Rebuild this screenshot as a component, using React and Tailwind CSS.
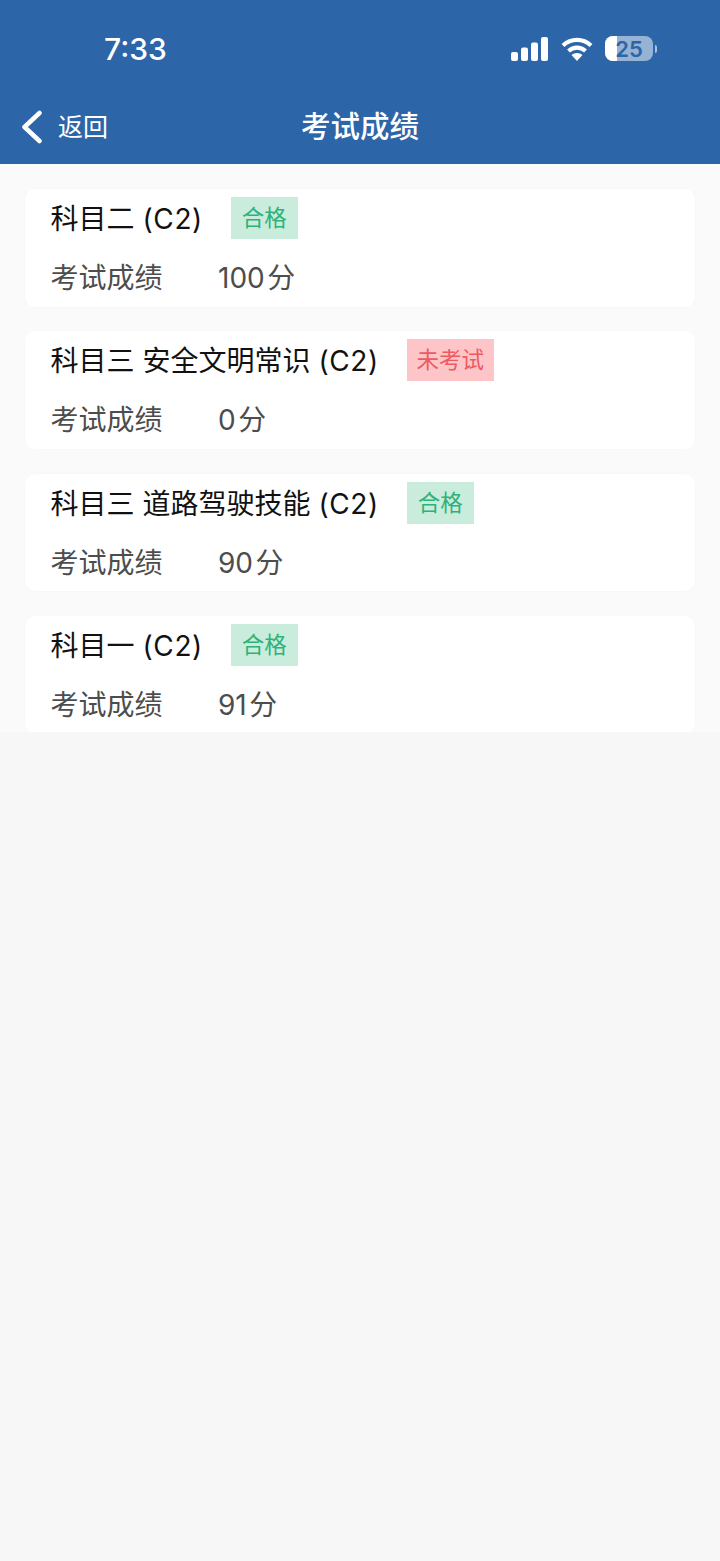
const scores = [
    { id: 1, title: "科目二", status: "合格", score: "100" },
    { id: 2, title: "科目三 安全文明常识", status: "未考试", score: "0" },
    { id: 3, title: "科目三 道路驾驶技能", status: "合格", score: "90" },
    { id: 4, title: "科目一", status: "合格", score: "91" },
];

function StatusBar() {
    return (
        <div className="flex h-[92px] items-start justify-between pl-[104px] pr-[63px] pt-[31px] text-white">
            <span className="text-[30px] font-medium leading-9">7:33</span>
            <div className="flex items-center pt-[5px]">
                <svg width="37" height="24" viewBox="0 0 37 24" fill="white">
                    <rect x="0" y="15" width="7" height="9" rx="2" />
                    <rect x="10" y="10.5" width="7" height="13.5" rx="2" />
                    <rect x="20" y="5.5" width="7" height="18.5" rx="2" />
                    <rect x="30" y="0" width="7" height="24" rx="2" />
                </svg>
                <svg className="ml-[13px]" width="32" height="24" viewBox="0 0 32 24" fill="none" stroke="white" strokeWidth="4.2">
                    <path d="M2 8.5C10 1 22 1 30 8.5" />
                    <path d="M7.5 14C12.5 9.5 19.5 9.5 24.5 14" />
                    <path d="M16 24l-5.5-6C13.5 15.2 18.5 15.2 21.5 18z" fill="white" stroke="none" />
                </svg>
                <div className="relative ml-3 flex h-[25px] w-12 items-center justify-center rounded-[8px] bg-white/50">
                    <div className="absolute inset-y-0 left-0 w-3 rounded-l-[8px] bg-white" />
                    <span className="relative text-[22px] font-semibold leading-none text-[#2c65a8]">25</span>
                </div>
                <div className="ml-[2px] h-2 w-[2px] rounded-r-sm bg-white/60" />
            </div>
        </div>
    );
}

function ScoreCard({ item }) {
    const passed = item.status === "合格";
    return (
        <div className="h-[117.5px] shrink-0 rounded-[10px] bg-white px-[25.5px] pt-2 shadow-[0_0_2px_rgba(0,0,0,0.03)]">
            <div className="flex h-[42px] items-start">
                <span className="mt-px text-[28px] leading-[42px] text-[#111111]">
                    {item.title}
                    <span className="ml-2 tracking-[0.6px]">(C2)</span>
                </span>
                <span
                    className={`ml-[28px] h-[42px] text-center text-[22.5px] leading-[42px] ${
                        passed ? "w-[67px] bg-[#c9ecdd] text-[#2fb27a]" : "w-[87px] bg-[#fdc5c7] text-[#ee5a60]"
                    }`}
                >
                    {item.status}
                </span>
            </div>
            <div className="mt-[18px] flex items-center text-[28px] leading-[42px] text-[#4d4d4d]">
                <span className="w-[167.5px]">考试成绩</span>
                <span>{item.score}</span>
                <span className="ml-[2.5px]">分</span>
            </div>
        </div>
    );
}

export default function App() {
    return (
        <div className="min-h-[1561px] bg-[#f7f7f7] font-['Inter','Noto_Sans_CJK_SC',sans-serif]">
            <div className="h-[164px] bg-[#2c65a8]">
                <StatusBar />
                <div className="relative flex h-[68px] items-center justify-center">
                    <div className="absolute left-[21px] top-[17px] flex items-center text-white">
                        <svg width="22" height="34" viewBox="0 0 22 34" fill="none" stroke="white" strokeWidth="4.5" strokeLinecap="round" strokeLinejoin="round">
                            <path d="M18.5 3L3.5 17l15 14" />
                        </svg>
                        <span className="ml-[15px] text-[25px] leading-9">返回</span>
                    </div>
                    <span className="text-[29.5px] font-medium leading-10 text-white">考试成绩</span>
                </div>
            </div>
            <div className="flex h-[568px] flex-col gap-[24.8px] overflow-hidden bg-[#fafafa] px-[25px] pt-[25px]">
                {scores.map((item) => (
                    <ScoreCard key={item.id} item={item} />
                ))}
            </div>
        </div>
    );
}
